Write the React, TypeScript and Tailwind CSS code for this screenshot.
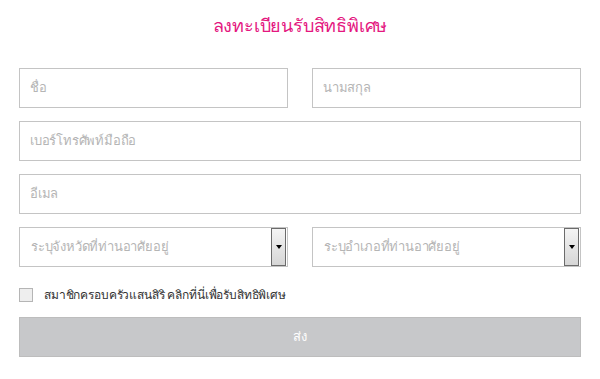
import React from "react";

const Dropdown = ({ placeholder }: { placeholder: string }) => (
  <div className="flex h-10 flex-1 items-center border border-[#c4c4c4] bg-white pl-[11px] pr-[1px]">
    <span className="flex-1 text-[13px] tracking-[-0.2px] text-[#b5b5b5]">{placeholder}</span>
    <div className="flex h-[38px] w-[15px] items-center justify-center border border-[#6b6b6b] bg-gradient-to-b from-[#f4f4f4] to-[#d6d6d6]">
      <div className="h-0 w-0 border-x-[3px] border-t-[4px] border-x-transparent border-t-black" />
    </div>
  </div>
);

const Field = ({ placeholder, className = "" }: { placeholder: string; className?: string }) => (
  <div
    className={`flex h-10 items-center border border-[#c4c4c4] bg-white px-[10px] text-[13px] tracking-[-0.2px] text-[#b5b5b5] ${className}`}
  >
    {placeholder}
  </div>
);

export default function App() {
  return (
    <div className="min-h-[379px] w-[600px] bg-white font-['Noto_Sans','Liberation_Sans',sans-serif]">
      <div className="flex flex-col px-[19px] pt-[9px]">
        <h1 className="text-center text-[18px] font-normal leading-[32px] tracking-[-0.2px] text-[#e4177f]">
          ลงทะเบียนรับสิทธิพิเศษ
        </h1>
        <div className="mt-[27px] flex flex-col gap-[13px]">
          <div className="flex gap-[24px]">
            <Field placeholder="ชื่อ" className="flex-1" />
            <Field placeholder="นามสกุล" className="flex-1" />
          </div>
          <Field placeholder="เบอร์โทรศัพท์มือถือ" className="w-full" />
          <Field placeholder="อีเมล" className="w-full" />
          <div className="flex gap-[24px]">
            <Dropdown placeholder="ระบุจังหวัดที่ท่านอาศัยอยู่" />
            <Dropdown placeholder="ระบุอำเภอที่ท่านอาศัยอยู่" />
          </div>
        </div>
        <label className="mt-[19px] flex items-center gap-[11px]">
          <span className="h-[14px] w-[14px] border border-[#b5b5b5] bg-[#eeeeee]" />
          <span className="text-[12px] tracking-[-0.15px] text-[#333333]">
            สมาชิกครอบครัวแสนสิริ คลิกที่นี่เพื่อรับสิทธิพิเศษ
          </span>
        </label>
        <button className="mt-[13px] h-10 w-full border border-[#bdbdbd] bg-[#c7c8ca] text-[13px] text-white">
          ส่ง
        </button>
      </div>
    </div>
  );
}
